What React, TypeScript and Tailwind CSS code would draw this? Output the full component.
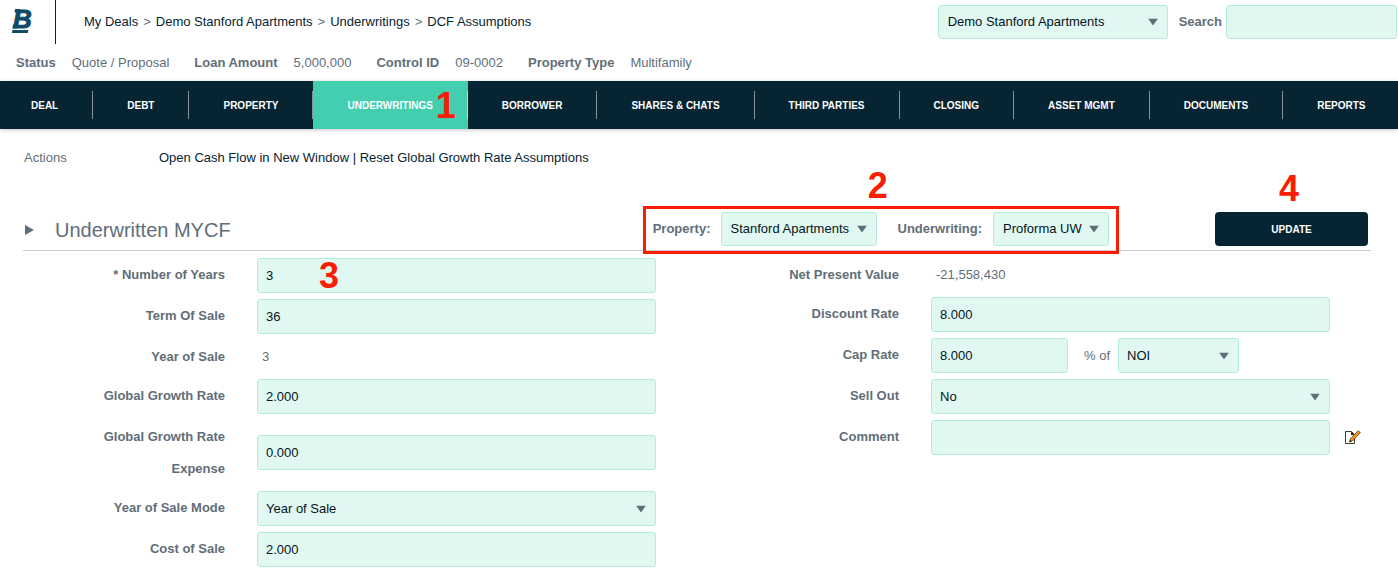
import { useState, type ReactNode } from "react";

const navItems = [
  "Deal",
  "Debt",
  "Property",
  "Underwritings",
  "Borrower",
  "Shares & Chats",
  "Third Parties",
  "Closing",
  "Asset Mgmt",
  "Documents",
  "Reports",
];

const dealFacts = [
  { label: "Status", value: "Quote / Proposal" },
  { label: "Loan Amount", value: "5,000,000" },
  { label: "Control ID", value: "09-0002" },
  { label: "Property Type", value: "Multifamily" },
];

const breadcrumbs = ["My Deals", "Demo Stanford Apartments", "Underwritings", "DCF Assumptions"];

const boxClass = "w-full rounded-[3px] border border-[#b3ecdd] bg-[#e1f8f2] text-[13px] text-[#04141c] outline-none";

type SelectProps = {
  id: string;
  options: string[];
  className?: string;
  size?: string;
};

function Select({ id, options, className = "w-full", size = "h-[35px] px-2" }: SelectProps) {
  return (
    <div className={`relative ${className}`}>
      <select id={id} className={`${boxClass} ${size} block appearance-none`}>
        {options.map((option) => (
          <option key={option}>{option}</option>
        ))}
      </select>
      <svg
        viewBox="0 0 10 7"
        className="pointer-events-none absolute top-1/2 right-[10px] h-[7px] w-[10px] -translate-y-1/2 fill-[#5f6f79]"
      >
        <path d="M0 0h10L5 7z" />
      </svg>
    </div>
  );
}

function TextInput({ id, value }: { id: string; value: string }) {
  const [text, setText] = useState(value);

  return (
    <input
      id={id}
      type="text"
      value={text}
      onChange={(event) => setText(event.target.value)}
      className={`${boxClass} block h-[35px] px-2`}
    />
  );
}

type FieldProps = {
  label: string;
  id?: string;
  children: ReactNode;
  extra?: ReactNode;
};

function Field({ label, id, children, extra }: FieldProps) {
  return (
    <div className="flex min-h-[33px] items-start">
      <label htmlFor={id} className="w-[234px] shrink-0 pt-px pr-8 pl-14 text-right leading-8 font-bold">
        {label}
      </label>
      <div className="flex min-w-0 flex-1 self-center">{children}</div>
      <div className="flex w-[41px] shrink-0 self-center pl-[15px]">{extra}</div>
    </div>
  );
}

function StepNumber({ step, className }: { step: number; className: string }) {
  return (
    <span className={`pointer-events-none absolute text-4xl leading-none font-bold text-[#f91d04] ${className}`}>
      {step}
    </span>
  );
}

function Logo() {
  return (
    <svg viewBox="0 0 40 44" className="h-11 w-10 fill-[#0f4a66]">
      <text
        x="13"
        y="28"
        fontSize="26"
        fontWeight="700"
        fontStyle="italic"
        fontFamily="Liberation Sans"
        stroke="#0f4a66"
        strokeWidth="1"
      >
        B
      </text>
      <path d="M15 9h5v3.500h-5.500zM13 24.500h4V28.500h-4.500z" />
      <path d="M12.300 30h16l-.5 3h-16z" />
    </svg>
  );
}

function EditIcon() {
  return (
    <svg viewBox="0 0 16 15" className="h-[15px] w-4">
      <path d="M.5 1.500h6l3 3v9h-9z" fill="#fff" stroke="#3b3b3b" />
      <path d="M6 1.500v3.500h3.500z" fill="#222" />
      <path d="M4.500 12l1-3.500L13 .8l2.400 1.700L7.500 11z" fill="#ef9021" stroke="#6b4216" strokeWidth=".8" />
      <path d="M4.300 12.300l.8-2.500 1.700 1.500z" fill="#222" />
    </svg>
  );
}

export default function App() {
  return (
    <div className="bg-white pb-5 font-['Liberation_Sans',Arial,sans-serif] text-[13px] text-[#5f6e79]">
      <header>
        <div className="flex h-11 items-center">
          <a href="#" aria-label="Home" className="h-full w-14 shrink-0 border-r border-[#062431]">
            <Logo />
          </a>
          <nav aria-label="Breadcrumb" className="flex gap-[5px] pl-7">
            {breadcrumbs.map((crumb, index) => (
              <span key={crumb} className="flex gap-[5px]">
                {index > 0 && <span>&gt;</span>}
                <a href="#" className="text-[#062431]">
                  {crumb}
                </a>
              </span>
            ))}
          </nav>
          <div className="ml-auto flex items-center pr-px">
            <Select id="deal" options={["Demo Stanford Apartments"]} className="w-[230px]" size="h-[34px] px-[9px]" />
            <label htmlFor="search" className="pr-1 pl-[11px] font-bold">
              Search
            </label>
            <input id="search" type="search" className={`${boxClass} h-[34px] max-w-[171px] px-[9px]`} />
          </div>
        </div>

        <dl className="flex h-[37px] items-center gap-[25px] pl-4">
          {dealFacts.map((fact) => (
            <div key={fact.label} className="flex gap-4">
              <dt className="font-bold">{fact.label}</dt>
              <dd>{fact.value}</dd>
            </div>
          ))}
        </dl>

        <nav className="flex h-12 bg-[#062431] pr-[34px] text-[10px] font-bold text-white uppercase shadow-[0_1px_4px_rgba(6,36,49,0.25)]">
          {navItems.map((item) => (
            <a
              key={item}
              href="#"
              className={`relative flex items-center whitespace-nowrap ${
                item === "Underwritings" ? "bg-[#43ceb0]" : ""
              }`}
            >
              <span
                className={`flex h-7 items-center border-white/50 ${item === "Deal" ? "pl-[31px]" : "pl-[34px]"} ${
                  item === "Reports" ? "" : "border-r pr-[34px]"
                }`}
              >
                {item}
              </span>
              {item === "Underwritings" && <StepNumber step={1} className="top-[7px] right-3" />}
            </a>
          ))}
        </nav>
      </header>

      <main className="pr-[27px] pl-[23px]">
        <div className="flex h-[57px] items-center pl-px">
          <span className="w-[135px]">Actions</span>
          <div className="text-[#062431]">
            <a href="#">Open Cash Flow in New Window</a> | <a href="#">Reset Global Growth Rate Assumptions</a>
          </div>
        </div>

        <section>
          <div className="flex items-center border-b border-[#c8cbc9] pt-[26px] pr-[3px] pb-1">
            <h2 className="flex items-center pt-[2px] text-xl">
              <svg viewBox="0 0 9 10" className="mr-[21px] ml-[2px] h-[10px] w-[9px] fill-[#5f6f79]">
                <path d="M0 0l9 5-9 5z" />
              </svg>
              Underwritten MYCF
            </h2>
            <div className="relative mr-24 ml-auto flex items-center px-[10px]">
              <label htmlFor="property" className="mr-[10px] font-bold">
                Property:
              </label>
              <Select
                id="property"
                options={["Stanford Apartments"]}
                className="w-[156px]"
                size="h-[34px] px-[9px]"
              />
              <label htmlFor="underwriting" className="mr-[11px] ml-[21px] font-bold">
                Underwriting:
              </label>
              <Select id="underwriting" options={["Proforma UW"]} className="w-[116px]" size="h-[34px] px-[9px]" />
              <div className="pointer-events-none absolute -inset-x-0 -top-[6px] -bottom-2 border-3 border-[#f91d04]" />
              <StepNumber step={2} className="-top-11 left-[225px]" />
            </div>
            <div className="relative">
              <button
                type="button"
                className="block h-[34px] w-[153px] rounded bg-[#062431] text-[10px] font-bold text-white uppercase"
              >
                Update
              </button>
              <StepNumber step={4} className="-top-[41px] left-16" />
            </div>
          </div>

          <form className="grid grid-cols-2 pt-[7px]">
            <div className="flex flex-col gap-[6px]">
              <Field label="* Number of Years" id="years">
                <div className="relative w-full">
                  <TextInput id="years" value="3" />
                  <StepNumber step={3} className="top-0 left-[62px]" />
                </div>
              </Field>
              <Field label="Term Of Sale" id="term">
                <TextInput id="term" value="36" />
              </Field>
              <Field label="Year of Sale">
                <span className="pl-[5px]">3</span>
              </Field>
              <Field label="Global Growth Rate" id="growth">
                <TextInput id="growth" value="2.000" />
              </Field>
              <Field label="Global Growth Rate Expense" id="expense">
                <TextInput id="expense" value="0.000" />
              </Field>
              <Field label="Year of Sale Mode" id="mode">
                <Select id="mode" options={["Year of Sale"]} />
              </Field>
              <Field label="Cost of Sale" id="cost">
                <TextInput id="cost" value="2.000" />
              </Field>
            </div>

            <div className="flex flex-col gap-[6px]">
              <Field label="Net Present Value">
                <span className="pl-[5px]">-21,558,430</span>
              </Field>
              <Field label="Discount Rate" id="discount">
                <TextInput id="discount" value="8.000" />
              </Field>
              <Field label="Cap Rate" id="cap">
                <div className="w-[137px]">
                  <TextInput id="cap" value="8.000" />
                </div>
                <label htmlFor="cap-basis" className="self-center pr-2 pl-4">
                  % of
                </label>
                <Select id="cap-basis" options={["NOI"]} className="w-[121px]" />
              </Field>
              <Field label="Sell Out" id="sell-out">
                <Select id="sell-out" options={["No"]} />
              </Field>
              <Field
                label="Comment"
                id="comment"
                extra={
                  <button type="button" aria-label="Edit comment">
                    <EditIcon />
                  </button>
                }
              >
                <TextInput id="comment" value="" />
              </Field>
            </div>
          </form>
        </section>
      </main>
    </div>
  );
}
